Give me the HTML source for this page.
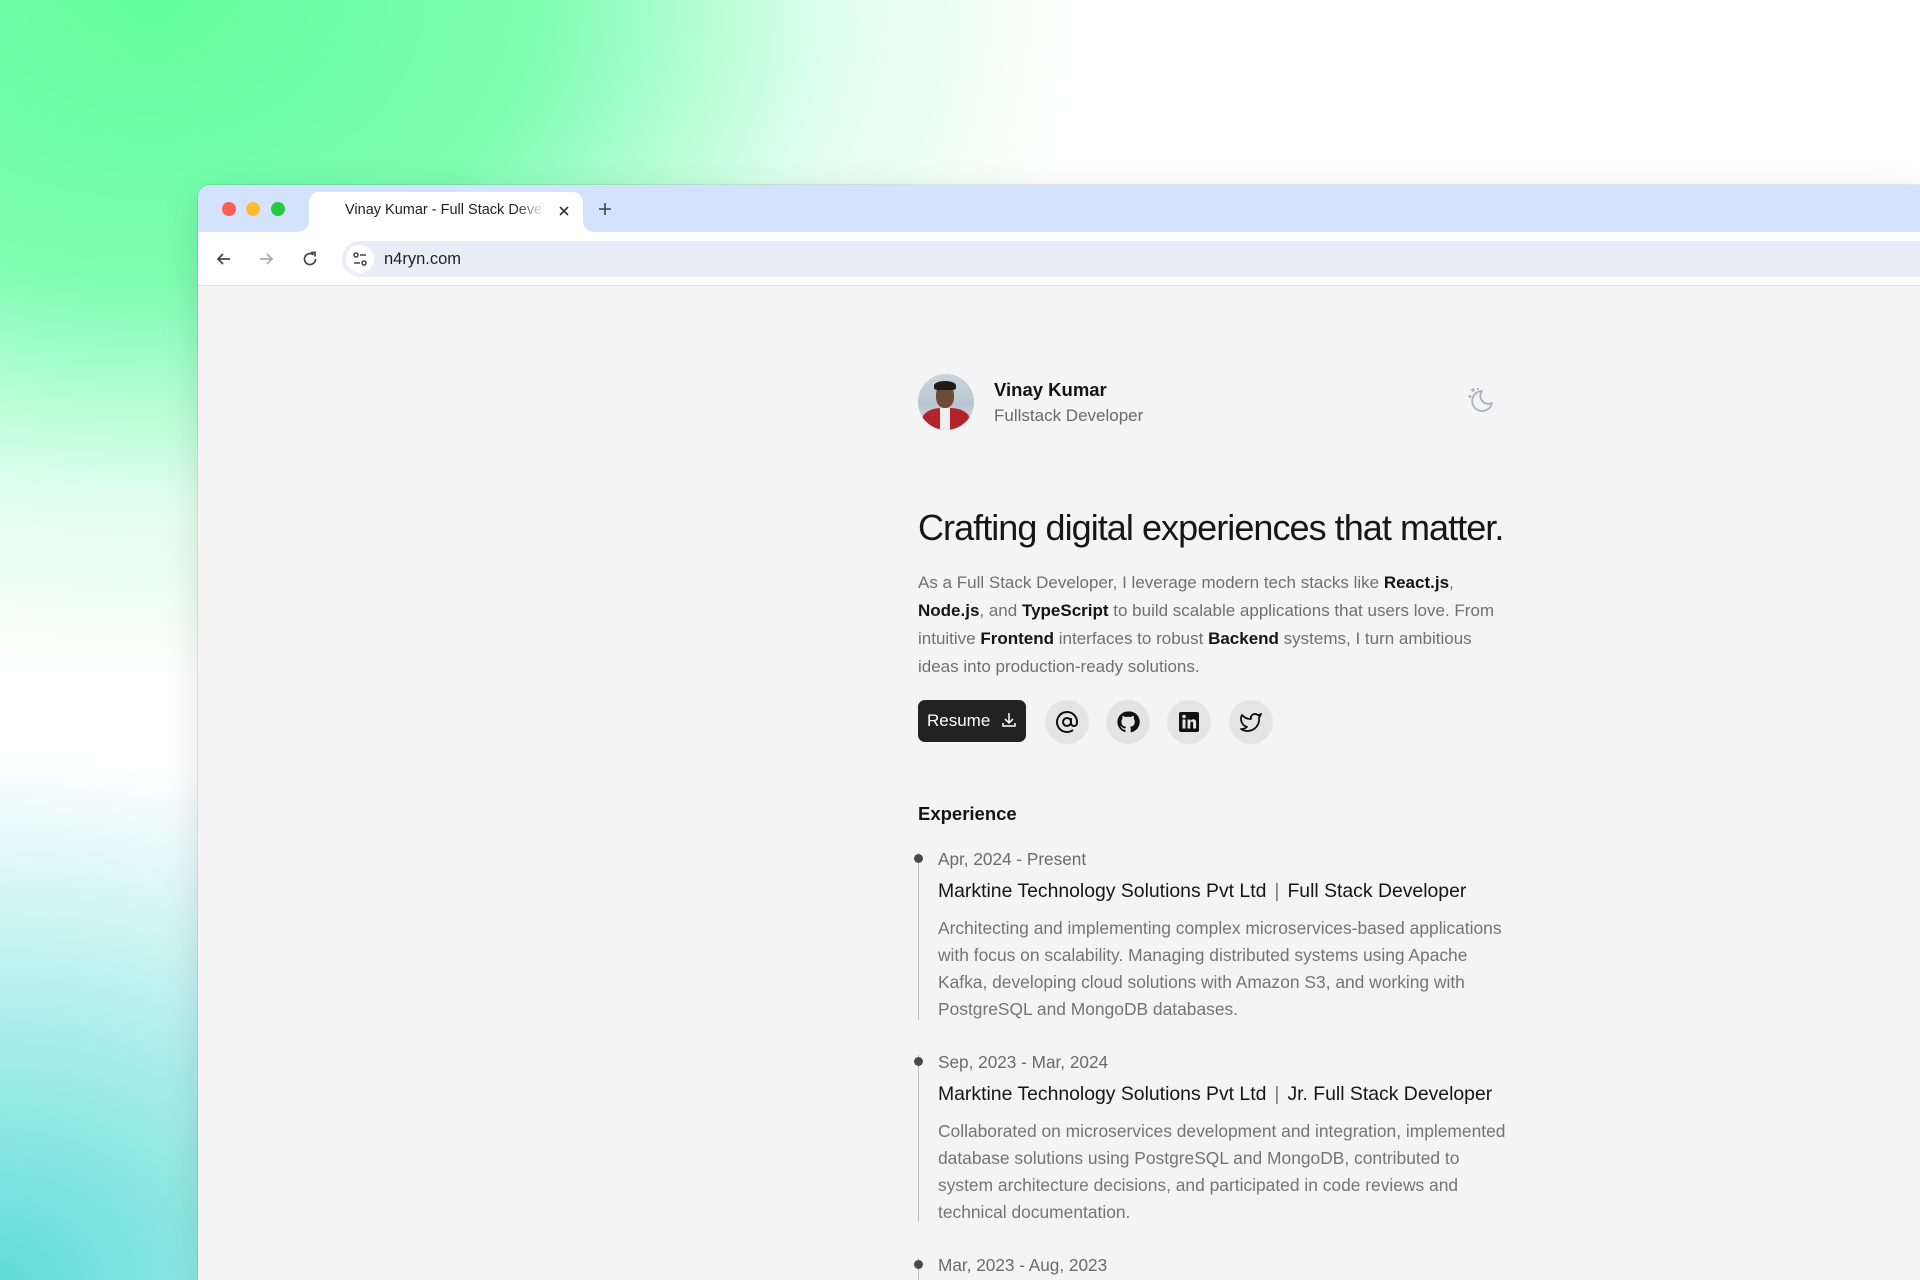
<!DOCTYPE html>
<html><head><meta charset="utf-8"><style>
*{margin:0;padding:0;box-sizing:border-box}
html,body{width:1920px;height:1280px;overflow:hidden;font-family:"Liberation Sans",Arial,sans-serif}
body{position:relative;background:
radial-gradient(ellipse 900px 700px at 0px 1280px,#5fdcd9 0%,rgba(110,225,220,.6) 35%,rgba(255,255,255,0) 75%),
radial-gradient(ellipse 1100px 800px at 150px 0px,#62ff9c 0%,#7dfdb0 35%,rgba(200,255,225,.6) 62%,rgba(255,255,255,0) 85%),
#fff}
.win{position:absolute;left:198px;top:185px;width:1722px;height:1095px;background:#f4f4f4;border-radius:12px 0 0 0;overflow:hidden;box-shadow:0 0 0 1px rgba(0,0,0,.08),0 10px 40px rgba(0,0,0,.12)}
.tabbar{position:absolute;left:0;top:0;right:0;height:47px;background:#d3e3fd}
.dot{position:absolute;top:17px;width:14px;height:14px;border-radius:50%}
.tab{position:absolute;left:111px;top:7px;width:274px;height:40px;background:#fff;border-radius:10px 10px 0 0}
.tab:before,.tab:after{content:"";position:absolute;bottom:0;width:10px;height:10px}
.tab:before{left:-10px;background:radial-gradient(circle at 0 0,#d3e3fd 9.5px,#fff 10px)}
.tab:after{right:-10px;background:radial-gradient(circle at 100% 0,#d3e3fd 9.5px,#fff 10px)}
.tabt{position:absolute;left:36px;top:10px;font-size:14.5px;color:#1f1f1f;white-space:nowrap;width:200px;overflow:hidden;-webkit-mask-image:linear-gradient(90deg,#000 85%,transparent)}
.toolbar{position:absolute;left:0;top:47px;right:0;height:54px;background:#fff;border-bottom:1px solid #e3e3e3}
.url{position:absolute;left:144px;top:9px;right:0;height:36px;background:#e9eef6;border-radius:18px 0 0 18px}
.url .t{position:absolute;left:42px;top:9px;font-size:16.5px;color:#1f1f1f}
.ic{position:absolute}
.main{position:absolute;left:720px;top:0}
.abs{position:absolute;white-space:nowrap}
.p{font-size:17px;color:#707070;line-height:28px}
.p b{color:#141414;font-weight:700}
.circ{position:absolute;top:515px;width:44px;height:44px;border-radius:50%;background:#e4e4e4;display:flex;align-items:center;justify-content:center}
.date{font-size:17.2px;color:#6b6b6b}
.ttl{font-size:19.4px;color:#161616}
.ttl .sep{color:#777;margin:0 8px}
.desc{font-size:17.4px;color:#747474;line-height:27px}
.line{position:absolute;left:0;width:1px;background:#bdbdbd}
.bul{position:absolute;left:-4px;width:9px;height:9px;border-radius:50%;background:#4a4a4a}
</style></head><body>
<div class="win">
 <div class="tabbar">
  <div class="dot" style="left:24px;background:#ff5f57"></div>
  <div class="dot" style="left:48px;background:#febc2e"></div>
  <div class="dot" style="left:73px;background:#28c840"></div>
  <div class="tab"><div class="tabt">Vinay Kumar - Full Stack Developer</div>
   <svg class="ic" style="left:248px;top:12px" width="14" height="14" viewBox="0 0 14 14"><path d="M3 3L11 11M11 3L3 11" stroke="#333" stroke-width="1.6"/></svg></div>
  <svg class="ic" style="left:399px;top:16px" width="16" height="16" viewBox="0 0 16 16"><path d="M8 2V14M2 8H14" stroke="#444" stroke-width="1.6"/></svg>
 </div>
 <div class="toolbar">
  <svg class="ic" style="left:17px;top:18px" width="18" height="18" viewBox="0 0 18 18"><path d="M15 9H3M8 4L3 9L8 14" fill="none" stroke="#444" stroke-width="1.7"/></svg>
  <svg class="ic" style="left:59px;top:18px" width="18" height="18" viewBox="0 0 18 18"><path d="M3 9H15M10 4L15 9L10 14" fill="none" stroke="#aaa" stroke-width="1.7"/></svg>
  <svg class="ic" style="left:103px;top:18px" width="18" height="18" viewBox="0 0 18 18"><path d="M14.5 9A5.5 5.5 0 1 1 12.5 4.8" fill="none" stroke="#444" stroke-width="1.7"/><path d="M10 2.5H14V6.5" fill="none" stroke="#444" stroke-width="1.7"/></svg>
  <div class="url">
   <div style="position:absolute;left:4px;top:4px;width:28px;height:28px;border-radius:50%;background:#fff"></div>
   <svg class="ic" style="left:9px;top:9px" width="18" height="18" viewBox="0 0 18 18"><circle cx="5" cy="5" r="2" fill="none" stroke="#444" stroke-width="1.5"/><path d="M9 5H15M3 13H9" stroke="#444" stroke-width="1.5"/><circle cx="13" cy="13" r="2" fill="none" stroke="#444" stroke-width="1.5"/></svg>
   <div class="t">n4ryn.com</div>
  </div>
 </div>
 <div class="main">
  <div class="abs" style="left:0;top:189px;width:56px;height:56px;border-radius:50%;overflow:hidden;background:linear-gradient(180deg,#c9d4de 0%,#b9c6d0 55%,#d8d8d8 100%)">
   <div style="position:absolute;left:18px;top:10px;width:18px;height:24px;border-radius:45%;background:#6b4a38"></div>
   <div style="position:absolute;left:16px;top:7px;width:22px;height:9px;border-radius:50% 50% 20% 20%;background:#1f1a18"></div>
   <div style="position:absolute;left:4px;top:34px;width:48px;height:30px;border-radius:40% 40% 0 0;background:#b3232b"></div>
   <div style="position:absolute;left:22px;top:34px;width:10px;height:22px;background:#eee"></div>
  </div>
  <div class="abs" style="left:76px;top:194px;font-size:18.5px;font-weight:700;color:#141414">Vinay Kumar</div>
  <div class="abs" style="left:76px;top:221px;font-size:17px;color:#6a6a6a">Fullstack Developer</div>
  <svg class="ic" style="left:549px;top:200px" width="30" height="30" viewBox="0 0 30 30"><path d="M15 6A10 10 0 1 0 25 18A8 8 0 0 1 15 6Z" fill="none" stroke="#aab0bb" stroke-width="1.8" stroke-linejoin="round"/><path d="M6 3V7M4 5H8M3 10V13M1.5 11.5H4.5M11 3V5M10 4H12" stroke="#aab0bb" stroke-width="1.4"/></svg>
 </div>
 <div class="abs" style="left:720px;top:322px;font-size:36px;color:#161616;letter-spacing:-0.95px">Crafting digital experiences that matter.</div>
 <div class="abs p" style="left:720px;top:384px">As a Full Stack Developer, I leverage modern tech stacks like <b>React.js</b>,<br><b>Node.js</b>, and <b>TypeScript</b> to build scalable applications that users love. From<br>intuitive <b>Frontend</b> interfaces to robust <b>Backend</b> systems, I turn ambitious<br>ideas into production-ready solutions.</div>
 <div class="abs" style="left:720px;top:515px;width:108px;height:42px;border-radius:7px;background:#222;color:#fff;font-size:17px;padding:11px 0 0 9px">Resume
  <svg class="ic" style="left:82px;top:11px" width="18" height="18" viewBox="0 0 18 18"><path d="M9 2V12M5 8L9 12L13 8M3 12V15H15V12" fill="none" stroke="#fff" stroke-width="1.5"/></svg></div>
 <div class="circ" style="left:847px"><svg width="24" height="24" viewBox="0 0 24 24"><circle cx="12" cy="12" r="4" fill="none" stroke="#111" stroke-width="2"/><path d="M16 8V13A3 3 0 0 0 22 13V12A10 10 0 1 0 18 20" fill="none" stroke="#111" stroke-width="2"/></svg></div>
 <div class="circ" style="left:908px"><svg width="24" height="24" viewBox="0 0 24 24"><path d="M12 1.5A10.5 10.5 0 0 0 8.7 22c.5.1.7-.2.7-.5v-1.9c-2.9.6-3.5-1.3-3.5-1.3-.5-1.2-1.2-1.5-1.2-1.5-.9-.6.1-.6.1-.6 1 .1 1.6 1.1 1.6 1.1.9 1.6 2.5 1.1 3.1.9.1-.7.4-1.1.7-1.4-2.3-.3-4.8-1.2-4.8-5.2 0-1.1.4-2.1 1.1-2.8-.1-.3-.5-1.4.1-2.8 0 0 .9-.3 2.9 1.1a10 10 0 0 1 5.2 0c2-1.4 2.9-1.1 2.9-1.1.6 1.4.2 2.5.1 2.8.7.7 1.1 1.7 1.1 2.8 0 4-2.5 4.9-4.8 5.2.4.3.7 1 .7 2v2.9c0 .3.2.6.7.5A10.5 10.5 0 0 0 12 1.5Z" fill="#111"/></svg></div>
 <div class="circ" style="left:969px"><svg width="22" height="22" viewBox="0 0 22 22"><rect x="1" y="1" width="20" height="20" rx="2" fill="#111"/><rect x="4.5" y="8.5" width="3" height="9" fill="#e4e4e4"/><circle cx="6" cy="5.5" r="1.8" fill="#e4e4e4"/><path d="M9.5 8.5H12.3V10c.6-1 1.7-1.7 3-1.7 2.2 0 2.8 1.4 2.8 3.5v5.7h-3v-5c0-1.2-.3-1.9-1.3-1.900s-1.5.8-1.5 1.9v5h-2.8Z" fill="#e4e4e4"/></svg></div>
 <div class="circ" style="left:1031px"><svg width="24" height="24" viewBox="0 0 24 24"><path d="M22 4s-.7 2.1-2 3.4c1.6 10-9.4 17.3-18 11.6 2.2.1 4.4-.6 6-2C3 15.5.5 9.6 3 5c2.2 2.6 5.6 4.1 9 4-.9-4.2 4-6.6 7-3.8 1.1 0 3-1.2 3-1.2Z" fill="none" stroke="#111" stroke-width="1.8" stroke-linejoin="round"/></svg></div>

 <div class="abs" style="left:720px;top:618px;font-size:18.5px;font-weight:700;color:#141414">Experience</div>
 <div style="position:absolute;left:720px;top:0">
  <div class="line" style="top:668px;height:167px"></div>
  <div class="bul" style="top:669px"></div>
  <div class="abs date" style="left:20px;top:664px">Apr, 2024 - Present</div>
  <div class="abs ttl" style="left:20px;top:695px">Marktine Technology Solutions Pvt Ltd<span class="sep">|</span>Full Stack Developer</div>
  <div class="abs desc" style="left:20px;top:730px">Architecting and implementing complex microservices-based applications<br>with focus on scalability. Managing distributed systems using Apache<br>Kafka, developing cloud solutions with Amazon S3, and working with<br>PostgreSQL and MongoDB databases.</div>

  <div class="line" style="top:870px;height:167px"></div>
  <div class="bul" style="top:872px"></div>
  <div class="abs date" style="left:20px;top:867px">Sep, 2023 - Mar, 2024</div>
  <div class="abs ttl" style="left:20px;top:898px">Marktine Technology Solutions Pvt Ltd<span class="sep">|</span>Jr. Full Stack Developer</div>
  <div class="abs desc" style="left:20px;top:933px">Collaborated on microservices development and integration, implemented<br>database solutions using PostgreSQL and MongoDB, contributed to<br>system architecture decisions, and participated in code reviews and<br>technical documentation.</div>

  <div class="line" style="top:1073px;height:40px"></div>
  <div class="bul" style="top:1075px"></div>
  <div class="abs date" style="left:20px;top:1070px">Mar, 2023 - Aug, 2023</div>
 </div>
</div>
</body></html>
